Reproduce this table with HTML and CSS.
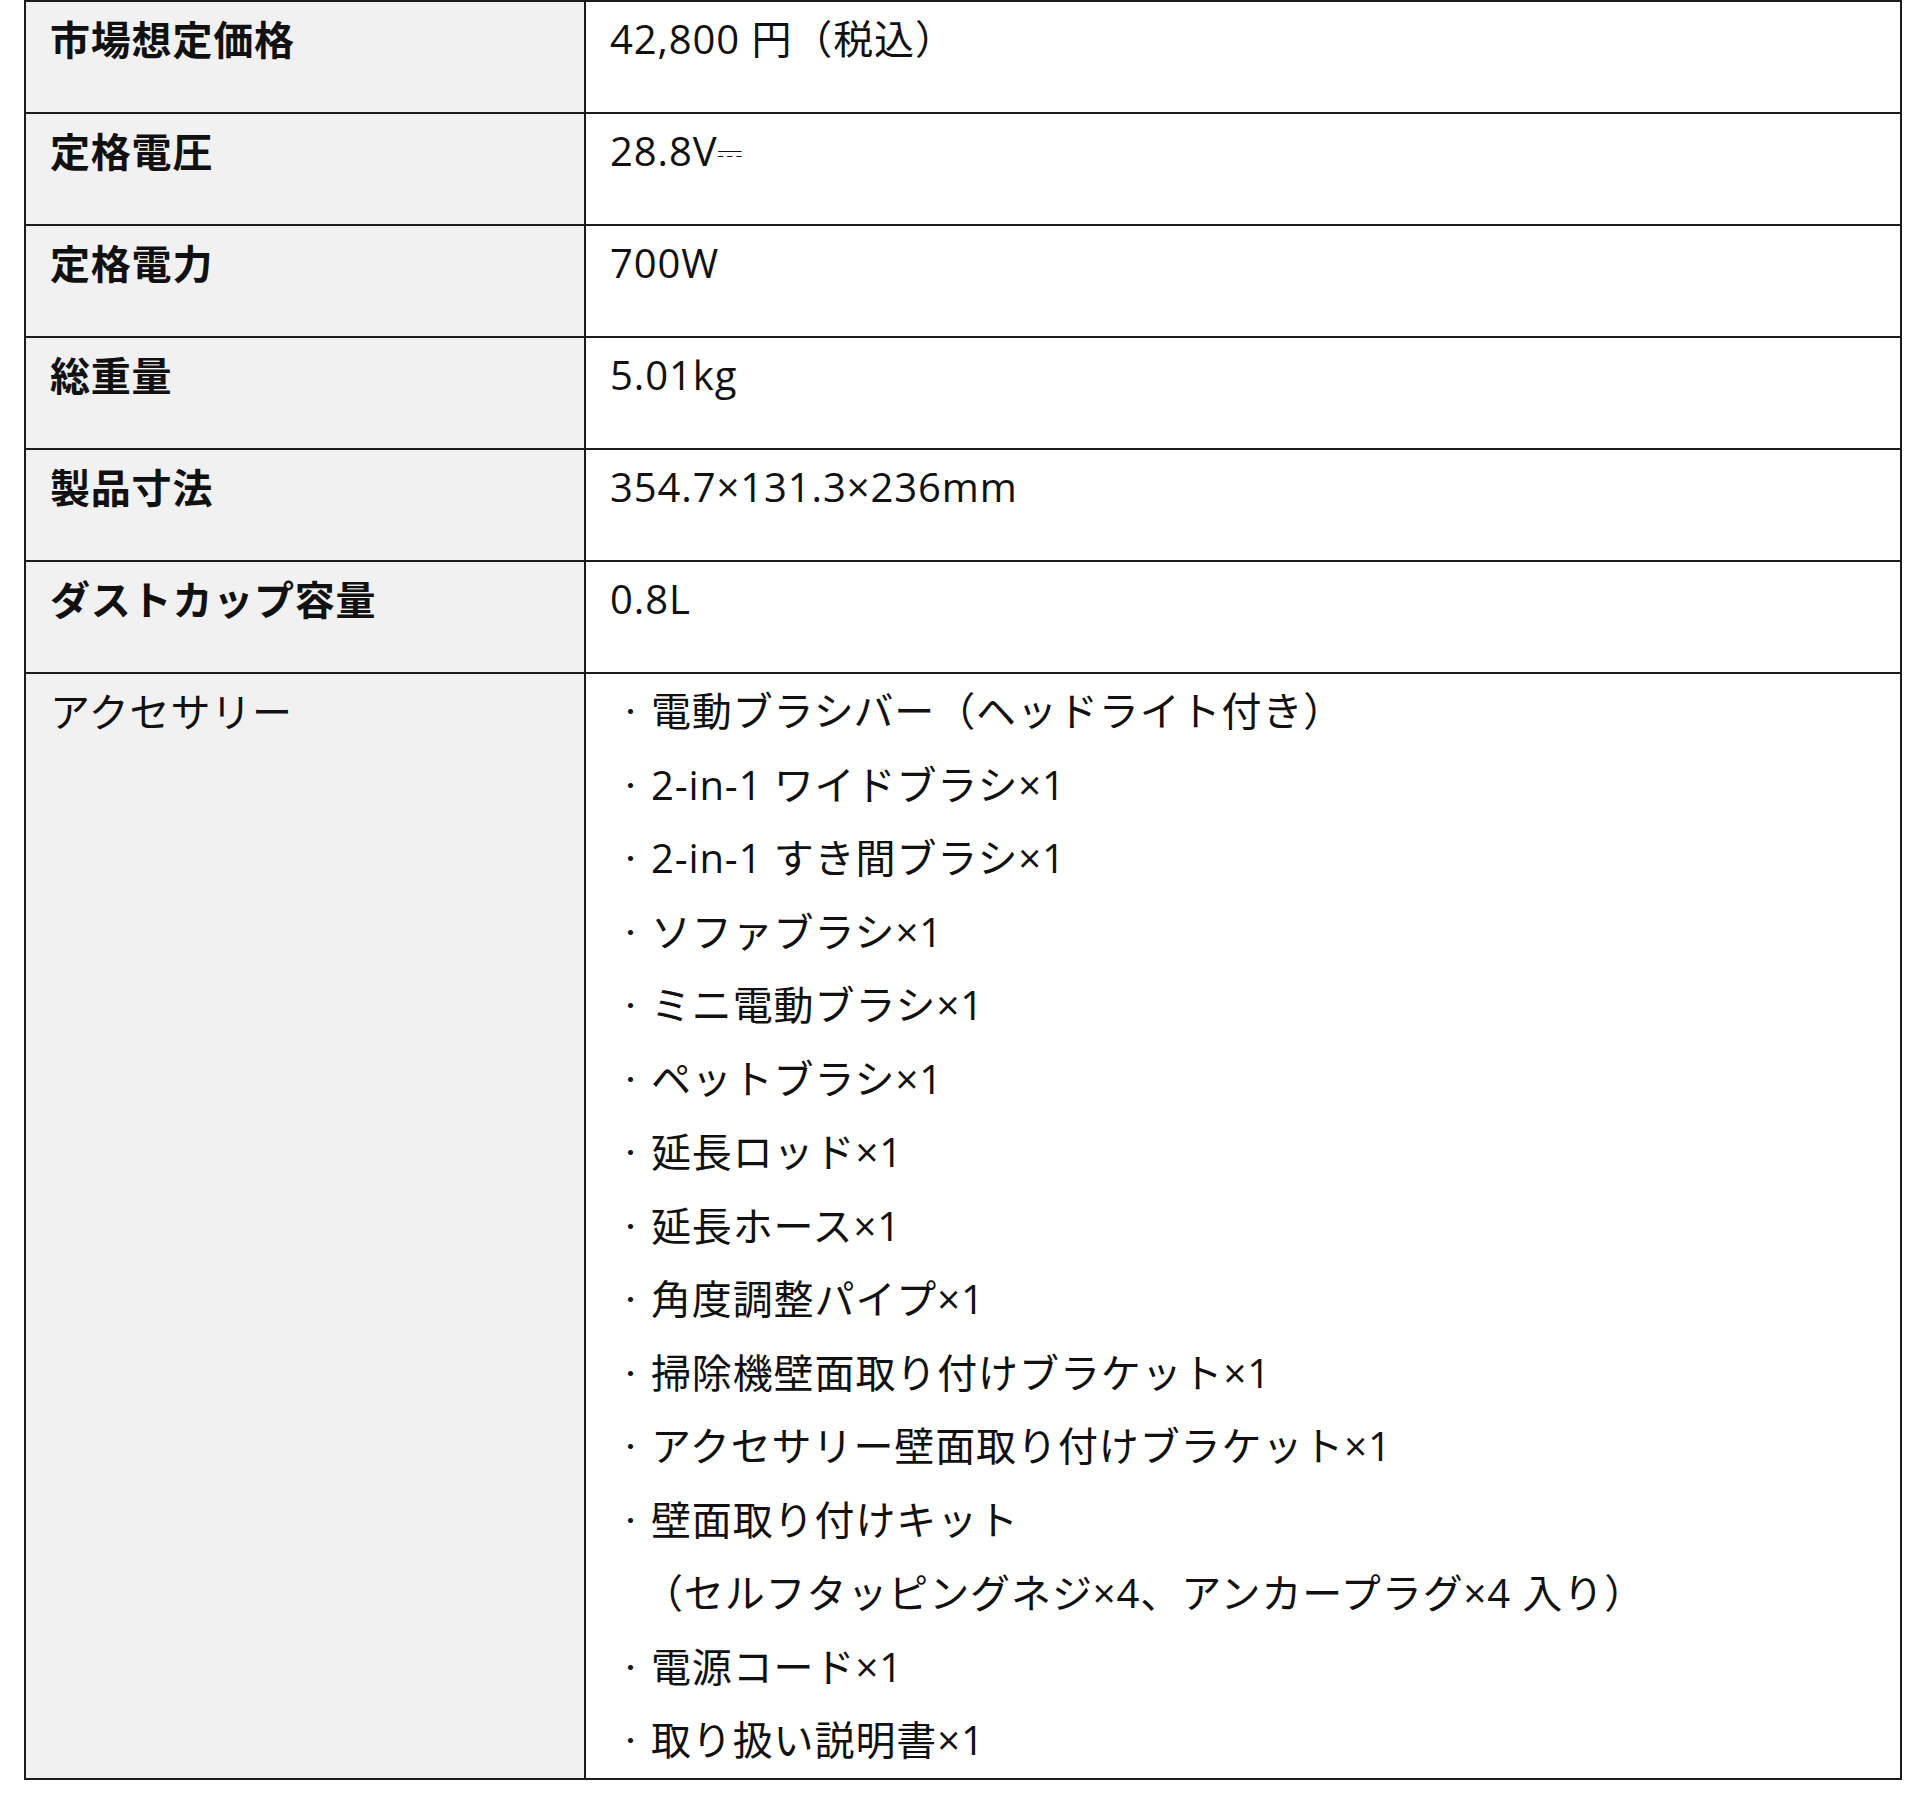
FILE: index.html
```html
<!DOCTYPE html>
<html lang="ja">
<head>
<meta charset="utf-8">
<title>製品仕様</title>
<link rel="stylesheet" href="styles.css">
</head>
<body>
<table class="spec">
  <tbody>
    <tr class="row">
      <th class="label">市場想定価格</th>
      <td class="value">42,800 円（税込）</td>
    </tr>
    <tr class="row">
      <th class="label">定格電圧</th>
      <td class="value">28.8V<span class="dc">⎓</span></td>
    </tr>
    <tr class="row">
      <th class="label">定格電力</th>
      <td class="value">700W</td>
    </tr>
    <tr class="row">
      <th class="label">総重量</th>
      <td class="value">5.01kg</td>
    </tr>
    <tr class="row">
      <th class="label">製品寸法</th>
      <td class="value">354.7×131.3×236mm</td>
    </tr>
    <tr class="row">
      <th class="label">ダストカップ容量</th>
      <td class="value">0.8L</td>
    </tr>
    <tr class="row-list">
      <th class="label label-light">アクセサリー</th>
      <td class="value">
        <ul class="items">
          <li><span class="dot">・</span>電動ブラシバー（ヘッドライト付き）</li>
          <li><span class="dot">・</span>2-in-1 ワイドブラシ×1</li>
          <li><span class="dot">・</span>2-in-1 すき間ブラシ×1</li>
          <li><span class="dot">・</span>ソファブラシ×1</li>
          <li><span class="dot">・</span>ミニ電動ブラシ×1</li>
          <li><span class="dot">・</span>ペットブラシ×1</li>
          <li><span class="dot">・</span>延長ロッド×1</li>
          <li><span class="dot">・</span>延長ホース×1</li>
          <li><span class="dot">・</span>角度調整パイプ×1</li>
          <li><span class="dot">・</span>掃除機壁面取り付けブラケット×1</li>
          <li><span class="dot">・</span>アクセサリー壁面取り付けブラケット×1</li>
          <li><span class="dot">・</span>壁面取り付けキット</li>
          <li class="cont">　（セルフタッピングネジ×4、アンカープラグ×4 入り）</li>
          <li><span class="dot">・</span>電源コード×1</li>
          <li><span class="dot">・</span>取り扱い説明書×1</li>
        </ul>
      </td>
    </tr>
  </tbody>
</table>
</body>
</html>
```

FILE: styles.css
```css
html, body {
  margin: 0;
  padding: 0;
  background: #ffffff;
}

body {
  font-family: "Open Sans", "Noto Sans CJK JP", sans-serif;
  color: #111111;
  font-size: 40px;
  line-height: 73.5px;
}

.spec {
  margin-left: 24px;
  width: 1878px;
  border-collapse: collapse;
  table-layout: fixed;
}

.label {
  width: 560px;
  box-sizing: border-box;
  background: #f1f1f1;
  font-weight: 700;
  text-align: left;
  vertical-align: top;
  padding: 0 0 0 24px;
  letter-spacing: 0.8px;
  border: 2px solid #1c1c1c;
  font-family: "Noto Sans CJK JP", sans-serif;
}

.label-light {
  font-weight: 400;
}

.value {
  background: #ffffff;
  vertical-align: top;
  padding: 0 0 0 24px;
  letter-spacing: 0.9px;
  border: 2px solid #1c1c1c;
  font-weight: 400;
}

.row .label,
.row .value {
  height: 112px;
  box-sizing: border-box;
}

.row-list .value {
  padding-bottom: 1px;
}

.dc {
  font-family: "DejaVu Sans", sans-serif;
  font-size: 32px;
  letter-spacing: 0;
  vertical-align: 3px;
}

.items {
  list-style: none;
  margin: 0;
  padding: 0;
}

.items li {
  margin: 0;
  padding: 0;
  white-space: nowrap;
}

.items .cont {
  padding-left: 12px;
}

.dot {
  display: inline-block;
  width: 40.9px;
  text-align: center;
  font-size: 24px;
  letter-spacing: 0;
  vertical-align: top;
}
```
